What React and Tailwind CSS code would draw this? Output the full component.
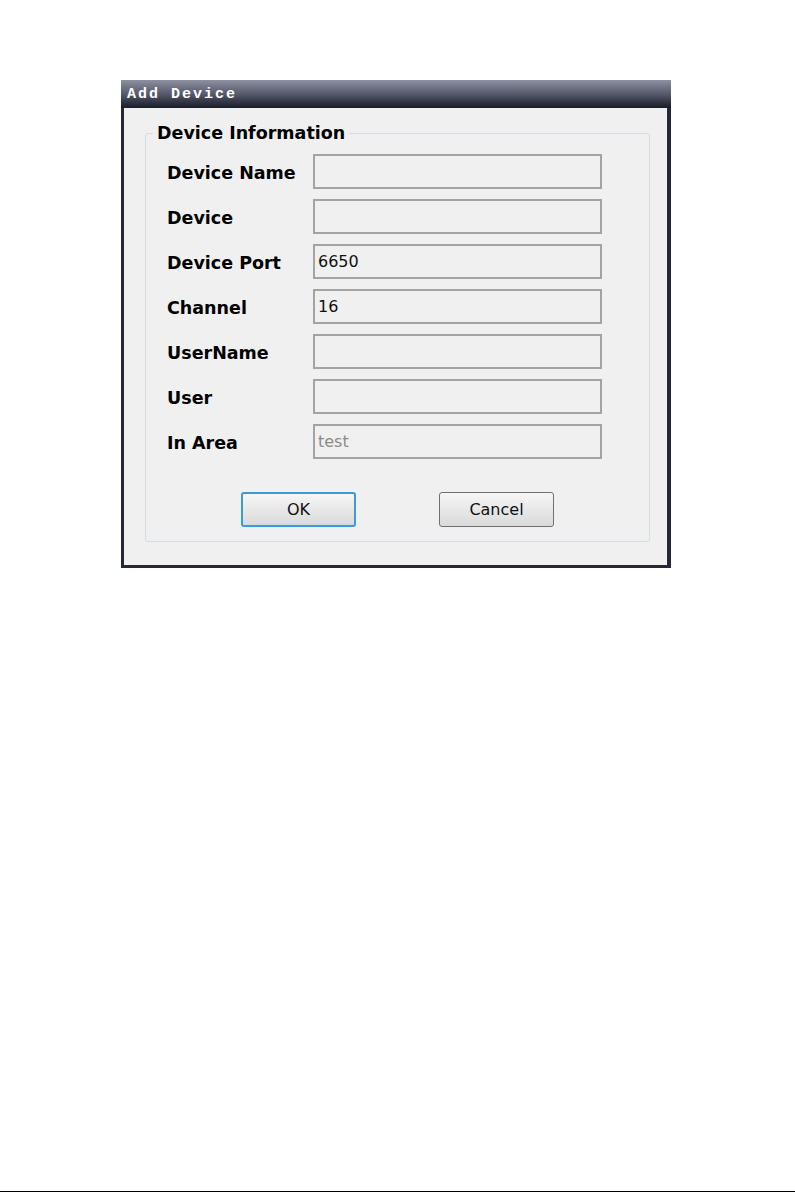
import React from "react";

const fields = [
  { label: "Device Name", value: "" },
  { label: "Device", value: "" },
  { label: "Device Port", value: "6650" },
  { label: "Channel", value: "16" },
  { label: "UserName", value: "" },
  { label: "User", value: "" },
  { label: "In Area", value: "test", disabled: true },
];

const FieldRow = ({ label, value, disabled }) => (
  <div className="flex items-center h-[35px]">
    <span className="w-[146px] pt-[3px] text-[17.5px] font-bold text-black">{label}</span>
    <div
      className={`w-[289px] h-[35px] border-2 border-[#a3a3a3] bg-[#f0f0f0] flex items-center px-[3px] text-[16px] ${
        disabled ? "text-[#8a8a8a]" : "text-[#111]"
      }`}
    >
      {value}
    </div>
  </div>
);

const Button = ({ label, focused }) => (
  <button
    className={`w-[115px] h-[35px] rounded-[3px] border text-[16px] text-[#111] bg-gradient-to-b from-[#f6f6f6] to-[#dadada] ${
      focused ? "border-[#3b9ad9] border-2" : "border-[#707070]"
    }`}
  >
    {label}
  </button>
);

export default function App() {
  return (
    <div className="w-[795px] h-[1192px] bg-white flex flex-col font-['DejaVu_Sans',sans-serif]">
      <div className="pt-[80px] pl-[121px]">
        <div className="w-[550px] h-[488px] flex flex-col">
          {/* Title bar */}
          <div className="h-[28px] bg-gradient-to-b from-[#8d91a1] via-[#555a6c] to-[#1b1c27] flex items-center pl-[6px] pt-[3px]">
            <span className="text-white font-bold text-[15px] tracking-[2px] font-['Liberation_Mono',monospace]">
              Add Device
            </span>
          </div>

          {/* Body */}
          <div className="flex-1 bg-[#f0f0f0] border-l-[3px] border-r-[4px] border-b-[3px] border-[#262836] pl-[21px] pr-[17px] pt-[14px]">
            <fieldset className="h-[420px] border border-[#d3dde4] rounded-[3px]">
              <legend className="ml-[7px] px-[4px] text-[17.5px] font-bold text-black leading-[22px]">
                Device Information
              </legend>
              <div className="pl-[21px]">
                <div className="flex flex-col gap-[10px] mt-[10px]">
                  {fields.map((f) => (
                    <FieldRow key={f.label} {...f} />
                  ))}
                </div>
                <div className="flex mt-[33px] pl-[74px] gap-[83px]">
                  <Button label="OK" focused />
                  <Button label="Cancel" />
                </div>
              </div>
            </fieldset>
          </div>
        </div>
      </div>
      <div className="mt-auto h-[1px] bg-black" />
    </div>
  );
}
